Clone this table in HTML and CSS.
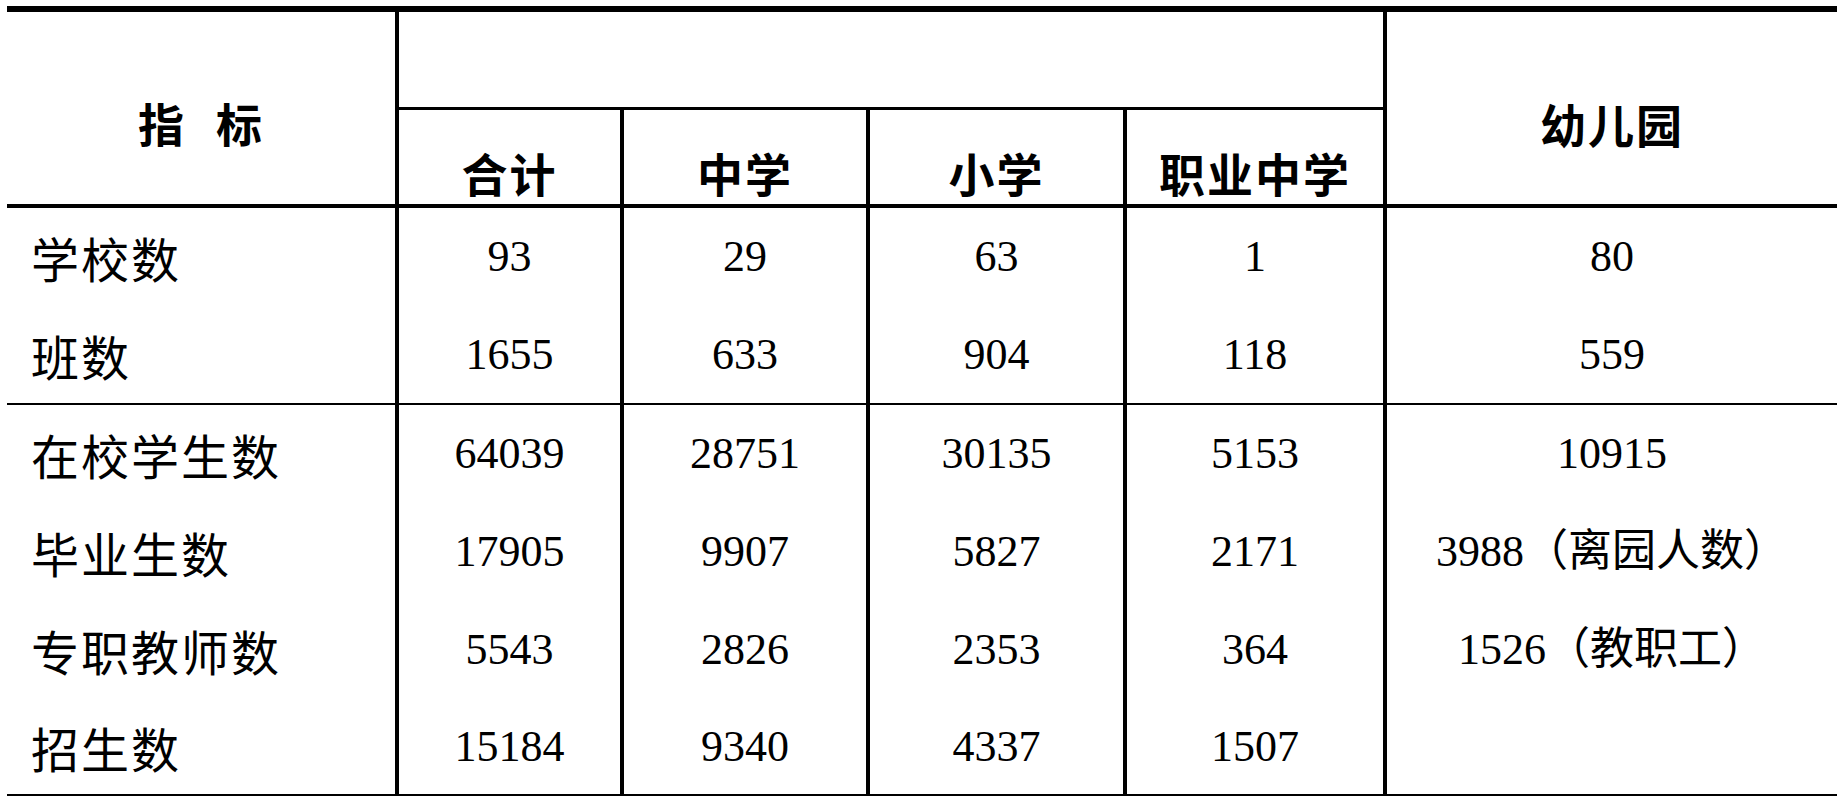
FILE: index.html
```html
<!DOCTYPE html>
<html lang="zh-CN">
<head>
<meta charset="utf-8">
<title>学校基本情况</title>
<link rel="stylesheet" href="styles.css">
</head>
<body>
<div class="stats" role="table">
  <div class="cell hd index" role="columnheader"><span>指</span><span>标</span></div>
  <div class="cell hd group" role="columnheader"></div>
  <div class="cell hd kinder" role="columnheader">幼儿园</div>
  <div class="cell hd sub" role="columnheader">合计</div>
  <div class="cell hd sub" role="columnheader">中学</div>
  <div class="cell hd sub" role="columnheader">小学</div>
  <div class="cell hd sub" role="columnheader">职业中学</div>

  <div class="row" role="row">
    <div class="cell label">学校数</div>
    <div class="cell num">93</div>
    <div class="cell num">29</div>
    <div class="cell num">63</div>
    <div class="cell num">1</div>
    <div class="cell num last">80</div>
  </div>
  <div class="row sep" role="row">
    <div class="cell label">班数</div>
    <div class="cell num">1655</div>
    <div class="cell num">633</div>
    <div class="cell num">904</div>
    <div class="cell num">118</div>
    <div class="cell num last">559</div>
  </div>
  <div class="row" role="row">
    <div class="cell label">在校学生数</div>
    <div class="cell num">64039</div>
    <div class="cell num">28751</div>
    <div class="cell num">30135</div>
    <div class="cell num">5153</div>
    <div class="cell num last">10915</div>
  </div>
  <div class="row" role="row">
    <div class="cell label">毕业生数</div>
    <div class="cell num">17905</div>
    <div class="cell num">9907</div>
    <div class="cell num">5827</div>
    <div class="cell num">2171</div>
    <div class="cell num last">3988（离园人数）</div>
  </div>
  <div class="row" role="row">
    <div class="cell label">专职教师数</div>
    <div class="cell num">5543</div>
    <div class="cell num">2826</div>
    <div class="cell num">2353</div>
    <div class="cell num">364</div>
    <div class="cell num last">1526（教职工）</div>
  </div>
  <div class="row end" role="row">
    <div class="cell label">招生数</div>
    <div class="cell num">15184</div>
    <div class="cell num">9340</div>
    <div class="cell num">4337</div>
    <div class="cell num">1507</div>
    <div class="cell num last"></div>
  </div>
</div>
</body>
</html>
```

FILE: styles.css
```css
html, body {
  margin: 0;
  padding: 0;
  background: #ffffff;
}

body {
  color: #000000;
  font-family: "Noto Sans CJK SC", sans-serif;
}

.stats {
  margin: 6px 0 0 7px;
  width: 1830px;
  border-top: 6px solid #000;
  display: grid;
  grid-template-columns: 392px 225px 246px 257px 260px 1fr;
  grid-template-rows: 98px 98px 98px 99px 98px 98px 98px 97px;
}

.row {
  display: contents;
}

.cell {
  box-sizing: border-box;
  display: flex;
  align-items: center;
  justify-content: center;
  border-right: 4px solid #000;
  line-height: 1;
  white-space: nowrap;
}

.hd {
  font-family: "Noto Sans CJK SC", sans-serif;
  font-weight: 700;
  font-size: 46px;
  letter-spacing: 2px;
}

.index {
  grid-row: 1 / span 2;
  grid-column: 1;
  border-bottom: 4px solid #000;
  padding-top: 28px;
  gap: 30px;
}

.group {
  grid-row: 1;
  grid-column: 2 / span 4;
  border-bottom: 3px solid #000;
}

.kinder {
  grid-row: 1 / span 2;
  grid-column: 6;
  border-right: none;
  border-bottom: 4px solid #000;
  padding-top: 30px;
}

.sub {
  border-bottom: 4px solid #000;
  padding-top: 30px;
}

.label {
  justify-content: flex-start;
  padding-left: 24px;
  font-size: 48px;
  letter-spacing: 2px;
}

.num {
  font-family: "Liberation Serif", "Noto Sans CJK SC", serif;
  font-size: 44px;
}

.last {
  border-right: none;
}

.sep > .cell,
.end > .cell {
  border-bottom: 2px solid #000;
}
```
